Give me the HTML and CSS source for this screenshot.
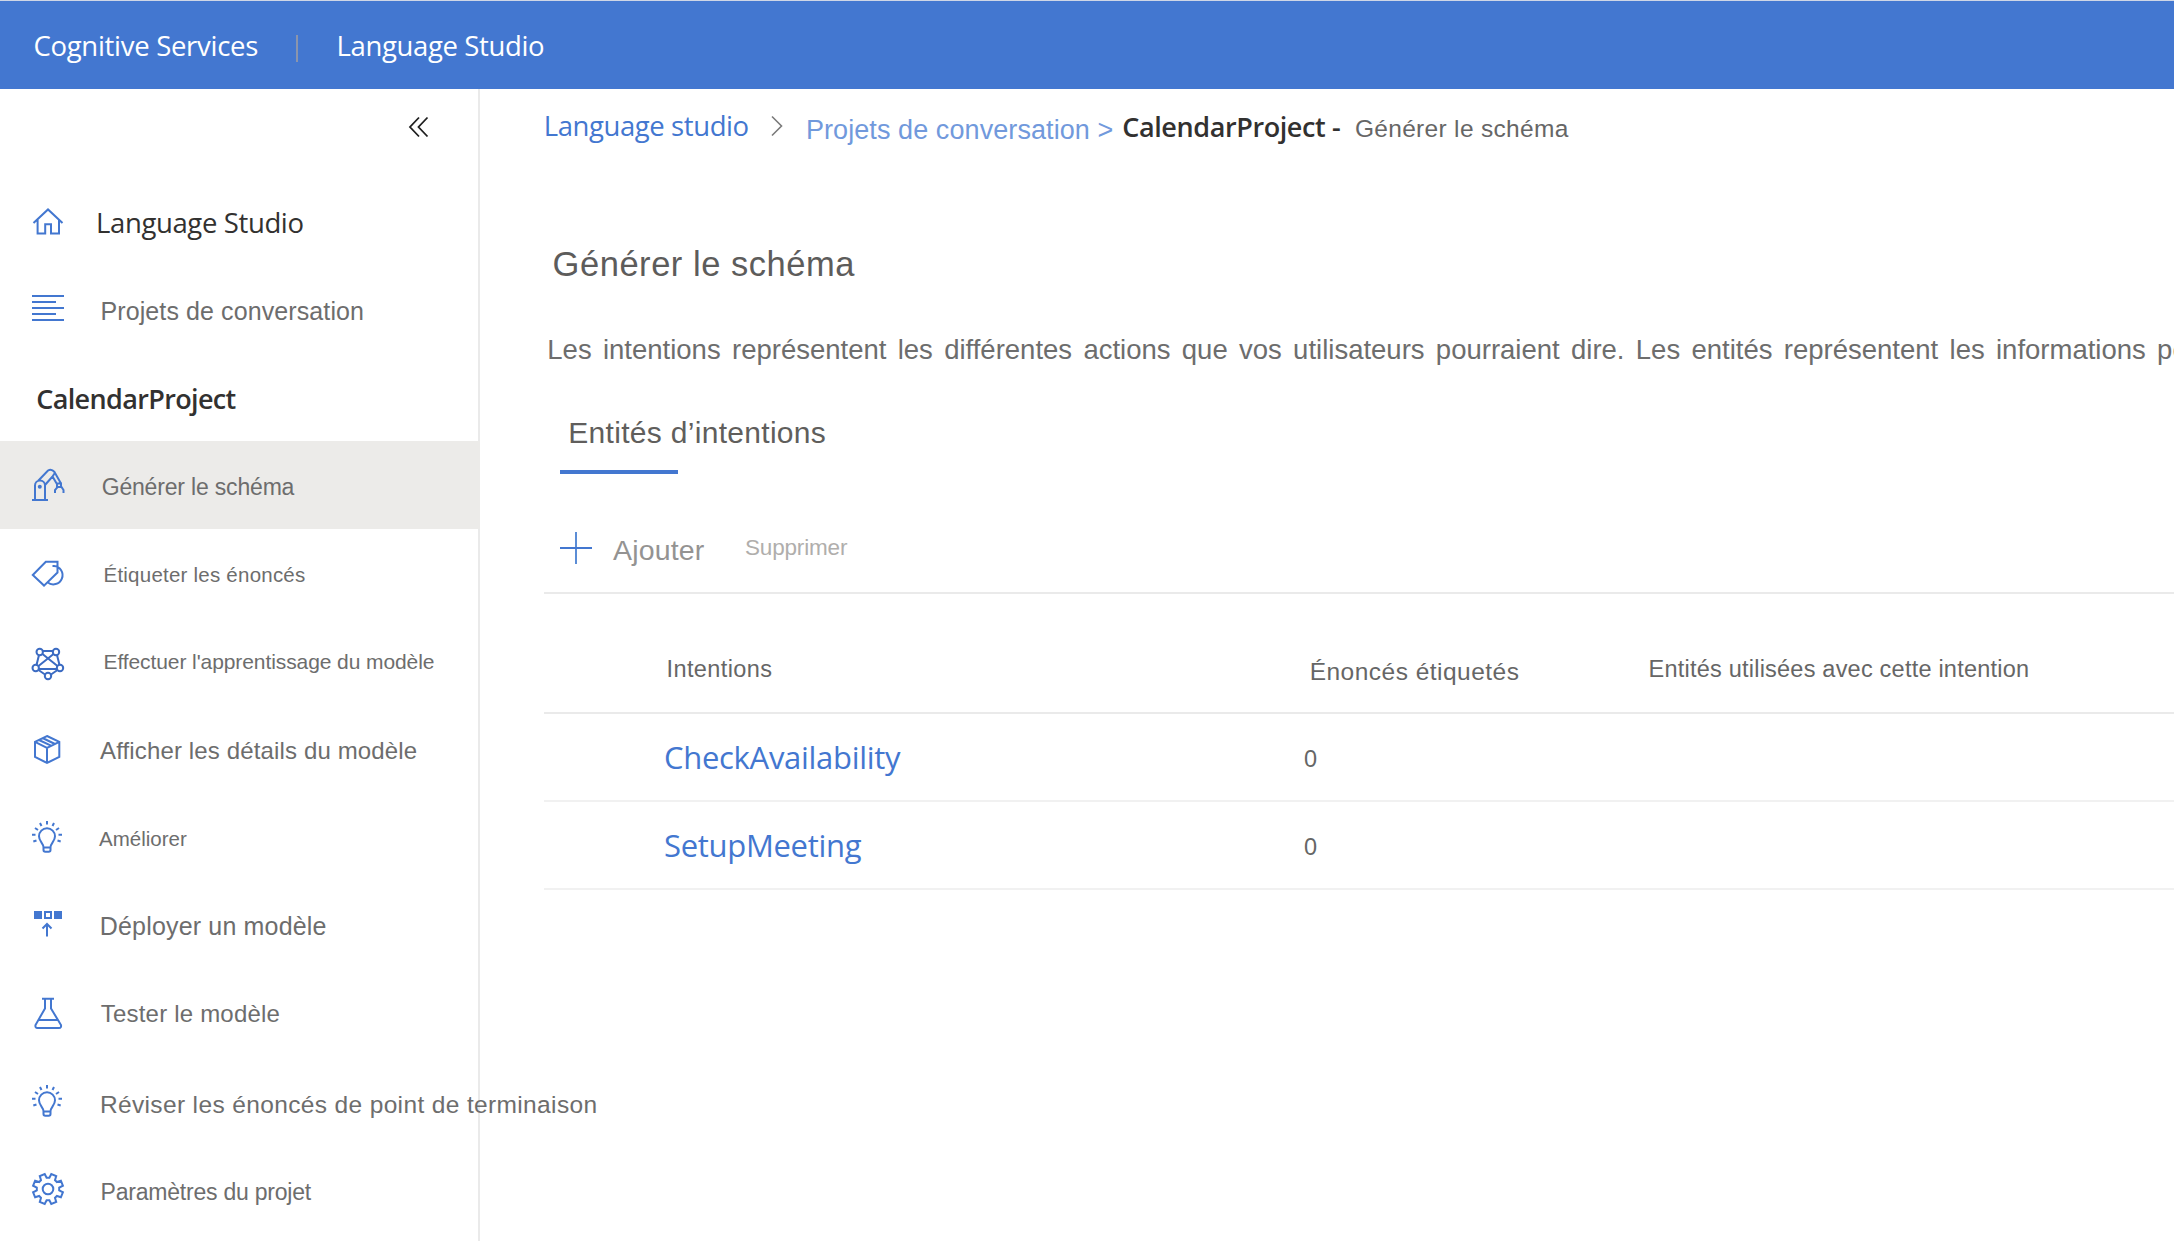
FILE: index.html
```html
<!DOCTYPE html>
<html lang="fr">
<head>
<meta charset="utf-8">
<title>Language Studio</title>
<link rel="stylesheet" href="styles.css">
</head>
<body>
<header class="topbar">
  <span class="t brand">Cognitive Services</span>
  <span class="divider"></span>
  <span class="t product">Language Studio</span>
</header>
<div class="shell">
  <aside class="sidebar">
    <div class="collapse"><svg width="22" height="22" viewBox="0 0 22 22"><path d="M11 1.500 2 11l9 9.500M19.500 1.500 10.500 11 19.500 20.500"/></svg></div>
    <nav>
      <ul class="menu">
        <li class="item"><svg class="icon" viewBox="0 0 36 44"><path d="M3.500 24 18 10.400 32.500 24M7.600 20.500V34.500h7.600V25.200h5.800v9.300h8V20.500"/></svg><span class="t home">Language Studio</span></li>
        <li class="item"><svg class="icon" viewBox="0 0 36 44"><path d="M2 9h32M2 15h24M2 21h32M2 27h24M2 33h32"/></svg><span class="t projects">Projets de conversation</span></li>
        <li class="item"><span class="t current">CalendarProject</span></li>
        <li class="item selected"><svg class="icon" viewBox="0 0 36 44"><path d="M2 37h16M5 37V22.500a5 5 0 0 1 10 0V37M8 18 18 7.500Q21.500 5.500 24.500 9L31 20.500M15 22 22.500 13.500 27.500 22M22.500 13.500 24.500 10.500M27 20.500h4v3.500h-4zM25 30v-3l2.500-3h4L33.500 27v3"/><circle class="dot" cx="9.800" cy="23.700" r="2"/></svg><span class="t schema">Générer le schéma</span></li>
        <li class="item"><svg class="icon" viewBox="0 0 36 44"><path d="M2.800 24 15.800 10.700H27.500V21.500L14 34.600ZM22.500 15H24a9.200 9.200 0 1 1-6.500 16.300"/></svg><span class="t tagging">Étiqueter les énoncés</span></li>
        <li class="item"><svg class="icon network" viewBox="0 0 36 44"><path d="M13 12h10M9 16 6.500 26M27 16l2.500 10M12.500 15 27.500 27M23.500 15 8.500 27M9 30h18M8.500 31 15 35.500M27.500 31 21 35.500"/><circle cx="9.700" cy="13" r="3.200"/><circle cx="26" cy="13" r="3.200"/><circle cx="5.700" cy="29" r="3.200"/><circle cx="30" cy="29" r="3.200"/><circle cx="18" cy="37" r="3.200"/></svg><span class="t training">Effectuer l'apprentissage du modèle</span></li>
        <li class="item"><svg class="icon" viewBox="0 0 36 44"><path d="M17 9 29.300 14.800V30L17 36 5 30V14.800ZM5 14.800 17 20.800 29.300 14.800M17 20.800V36M9 13 21.500 18.800M12.500 11 25 17"/></svg><span class="t details">Afficher les détails du modèle</span></li>
        <li class="item"><svg class="icon" viewBox="0 0 36 44"><path d="M13.500 32.500C13.500 28 9 26.500 9 21.300a8 8 0 0 1 16 0C25 26.500 20.500 28 20.500 32.500ZM13.500 32.500V35q0 1.800 1.800 1.800h3.400q1.800 0 1.800-1.800V32.500M17 6v3.500M10 8l1.500 3M24 8l-1.500 3M5 13l3 2M29 13l-3 2M2 19.700h3.500M32 19.700h-3.500M3.300 26.500l3.200-1M30.700 26.500l-3.200-1"/></svg><span class="t improve">Améliorer</span></li>
        <li class="item"><svg class="icon" viewBox="0 0 36 44"><path class="solid" d="M4 8h8v8H4zM24 8h8v8H24z"/><path d="M15 9h6v6H15zM17 21V33.500M12.500 25.500 17 21l4.500 4.500"/></svg><span class="t deploy">Déployer un modèle</span></li>
        <li class="item"><svg class="icon" viewBox="0 0 36 44"><path d="M12 7.700H24M15 7.700V17.500L5.500 34Q5 37 7.500 37H29Q31.500 37 31 34L21 17.500V7.700M9 29H27.500"/></svg><span class="t test">Tester le modèle</span></li>
        <li class="item"><svg class="icon" viewBox="0 0 36 44"><path d="M13.500 32.500C13.500 28 9 26.500 9 21.300a8 8 0 0 1 16 0C25 26.500 20.500 28 20.500 32.500ZM13.500 32.500V35q0 1.800 1.800 1.800h3.400q1.800 0 1.800-1.800V32.500M17 6v3.500M10 8l1.500 3M24 8l-1.500 3M5 13l3 2M29 13l-3 2M2 19.700h3.500M32 19.700h-3.500M3.300 26.500l3.200-1M30.700 26.500l-3.200-1"/></svg><span class="t review">Réviser les énoncés de point de terminaison</span></li>
        <li class="item"><svg class="icon" viewBox="-18 -22 36 44"><path d="M11.200 1.400 14.900 3.300 12.900 8.200 8.900 7 7 8.900 8.200 12.900 3.300 14.900 1.400 11.200H-1.400L-3.300 14.900-8.200 12.900-7 8.900-8.900 7-12.900 8.200-14.900 3.300-11.200 1.400V-1.400L-14.900-3.300-12.900-8.200-8.900-7-7-8.900-8.200-12.900-3.300-14.900-1.400-11.200H1.400L3.300-14.900 8.200-12.900 7-8.900 8.900-7 12.900-8.200 14.900-3.300 11.200-1.400Z"/><circle r="5.300"/></svg><span class="t settings">Paramètres du projet</span></li>
      </ul>
    </nav>
  </aside>
  <main class="content">
    <div class="breadcrumb">
      <a class="t crumb-root">Language studio</a>
      <svg class="chevron" width="12" height="22" viewBox="0 0 12 22"><path d="M1 1.500 10.500 11 1 20.500"/></svg>
      <a class="t crumb-projects">Projets de conversation &gt;</a>
      <span class="t crumb-name">CalendarProject -</span>
      <span class="t crumb-page">Générer le schéma</span>
    </div>
    <div class="heading"><h1 class="t title">Générer le schéma</h1></div>
    <div class="intro"><p class="t desc">Les intentions représentent les différentes actions que vos utilisateurs pourraient dire. Les entités représentent les informations pertinentes</p></div>
    <div class="tabs"><div class="tab"><span class="t tab-label">Entités d’intentions</span></div></div>
    <div class="toolbar">
      <svg class="plus" width="32" height="32" viewBox="0 0 32 32"><path class="light" d="M16 0V32"/><path d="M0 16H32"/></svg>
      <span class="t add">Ajouter</span>
      <span class="t remove">Supprimer</span>
    </div>
    <div class="row head">
      <span class="cell name"><span class="t th-intents">Intentions</span></span>
      <span class="cell"><span class="t th-count">Énoncés étiquetés</span></span>
      <span class="cell"><span class="t th-entities">Entités utilisées avec cette intention</span></span>
    </div>
    <div class="row">
      <span class="cell name"><a class="t link">CheckAvailability</a></span>
      <span class="cell"><span class="t count">0</span></span>
    </div>
    <div class="row">
      <span class="cell name"><a class="t link">SetupMeeting</a></span>
      <span class="cell"><span class="t count">0</span></span>
    </div>
  </main>
</div>
</body>
</html>
```
FILE: styles.css
```css
* { box-sizing: border-box; }
body { margin: 0; background: #fff; color: #6d6d6d; font-family: "Liberation Sans", Arial, sans-serif; overflow: hidden; }
svg { fill: none; stroke: #4377d0; stroke-width: 2; flex: none; }
.t { display: block; white-space: nowrap; flex: none; }

/* Top bar */
.topbar { display: flex; height: 89px; background: #4377d0; border-top: 1px solid #cfd6e6; color: #fff; font: 27.5px/88px "Open Sans", sans-serif; }
.brand { margin: 1px 0 0 33.4px; letter-spacing: -0.29px; }
.divider { width: 2px; height: 27px; margin: 34px 0 0 38px; background: #8b95ac; }
.product { margin: 1px 0 0 38.5px; letter-spacing: -0.36px; }

/* Sidebar */
.shell { display: flex; height: 1152px; }
.sidebar { width: 480px; flex: none; border-right: 2px solid #eaeaea; }
.collapse { height: 88px; padding: 27px 0 0 408px; }
.collapse svg { stroke: #1f1f1f; stroke-width: 1.8; display: block; }
.menu { margin: 0; padding: 0; list-style: none; }
.item { display: flex; height: 88px; line-height: 88px; }
.selected { background: #ecebe9; margin-right: -2px; }
.icon { width: 36px; height: 44px; margin: 22px 0 0 30px; }
.dot, .solid { fill: #4377d0; stroke: none; }
.network { stroke: #3b6bc2; }
.home { font-family: "Open Sans", sans-serif; font-size: 27.5px; color: #323130; margin: 2px 0 0 30px; letter-spacing: -0.37px; }
.current { font-family: "Open Sans", sans-serif; font-size: 27px; font-weight: 600; color: #323130; margin: 2px 0 0 36.2px; letter-spacing: -0.64px; }
.projects { font-size: 25px; margin: 2px 0 0 34.5px; letter-spacing: 0.1px; }
.schema { font-size: 23px; margin: 2px 0 0 35.7px; letter-spacing: -0.18px; }
.tagging { font-size: 20.5px; margin: 2px 0 0 37.5px; letter-spacing: 0.23px; }
.training { font-size: 21px; margin: 1px 0 0 37.5px; letter-spacing: -0.09px; }
.details { font-size: 24px; margin: 2px 0 0 34px; letter-spacing: 0.14px; }
.improve { font-size: 20.5px; margin: 2px 0 0 33px; letter-spacing: 0.01px; }
.deploy { font-size: 25px; margin: 1px 0 0 33.8px; letter-spacing: 0.17px; }
.test { font-size: 24px; margin: 1px 0 0 34.8px; letter-spacing: 0.2px; }
.review { font-size: 24.5px; margin: 4px 0 0 33.9px; letter-spacing: 0.36px; }
.settings { font-size: 23px; margin: 3px 0 0 34.6px; letter-spacing: -0.22px; }

/* Content */
.content { flex: 1; min-width: 0; padding-left: 64px; overflow: hidden; }
.breadcrumb { display: flex; height: 88px; line-height: 76px; }
.chevron { stroke: #7a7a7a; stroke-width: 1.6; margin: 26px 0 0 22px; }
.crumb-root { font-family: "Open Sans", sans-serif; font-size: 27.5px; color: #4377d0; margin: -1px 0 0 -0.3px; letter-spacing: -0.41px; }
.crumb-projects { font-size: 27px; color: #7199dc; margin: 3px 0 0 23.2px; letter-spacing: 0.08px; }
.crumb-name { font-family: "Open Sans", sans-serif; font-size: 27px; font-weight: 600; color: #323130; margin: 0 0 0 8.8px; letter-spacing: -0.39px; }
.crumb-page { font-size: 24.5px; color: #666; margin: 2px 0 0 14.6px; letter-spacing: 0.32px; }
.heading, .intro, .tabs { display: flex; }
.heading { height: 134px; line-height: 170px; }
.title { margin: 2px 0 0 8.6px; font-weight: 400; font-size: 34.5px; color: #5d5c5b; letter-spacing: 0.53px; }
.intro { height: 82px; line-height: 80px; }
.desc { margin: -1px 0 0 3.3px; font-size: 27.5px; word-spacing: 3.67px; }
.tabs { height: 81px; }
.tab { display: flex; width: 118px; margin-left: 16px; border-bottom: 4px solid #4377d0; line-height: 90px; }
.tab-label { font-size: 30px; color: #605e5c; margin: -5px 0 0 8.3px; letter-spacing: 0.3px; }
.toolbar { display: flex; height: 120px; border-bottom: 2px solid #eaeaea; line-height: 140px; }
.plus { margin: 58px 0 0 16px; }
.light { stroke: #5b8dd6; }
.add { font-size: 28.5px; color: #949392; margin: 6px 0 0 21px; letter-spacing: 0.15px; }
.remove { font-size: 22.5px; color: #b0aeac; margin: 4px 0 0 40.6px; letter-spacing: -0.16px; }

/* Intent table */
.row { display: grid; grid-template-columns: 757px 342px 1fr; height: 88px; line-height: 86px; border-bottom: 2px solid #f1f1f1; }
.head { height: 120px; border-color: #eaeaea; line-height: 150px; color: #666; font-size: 23.5px; }
.th-intents { margin-left: 2.5px; letter-spacing: 0.4px; }
.th-count { font-size: 24.5px; margin: 3px 0 0 8.7px; letter-spacing: 0.48px; }
.th-entities { margin-left: 5.6px; letter-spacing: 0.22px; }
.cell { display: flex; }
.name { padding-left: 120px; }
.link { font-family: "Open Sans", sans-serif; font-size: 31px; color: #4377d0; letter-spacing: -0.3px; }
.count { font-size: 23.5px; color: #666; margin: 2px 0 0 3px; }
```
